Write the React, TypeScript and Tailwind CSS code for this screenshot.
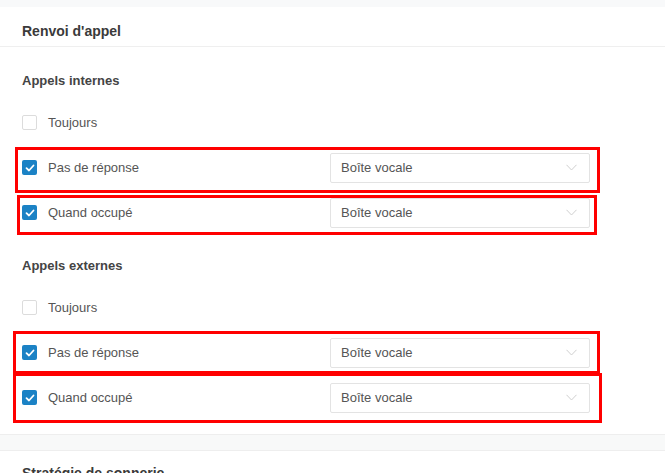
import React from "react";

const Check = ({ checked }: { checked: boolean }) =>
  checked ? (
    <span className="flex h-[15px] w-[15px] items-center justify-center rounded-[2px] bg-[#1b82c5]">
      <svg width="10" height="8" viewBox="0 0 10 8" fill="none">
        <path d="M1.5 4.2 L4 6.5 L8.5 1.5" stroke="white" strokeWidth="1.8" strokeLinecap="round" strokeLinejoin="round" />
      </svg>
    </span>
  ) : (
    <span className="block h-[15px] w-[15px] rounded-[2px] border border-[#dcdcdc] bg-white" />
  );

const Select = () => (
  <div className="flex h-[30px] w-[260px] items-center justify-between rounded-[2px] border border-[#e3e3e3] bg-white pl-[10px] pr-[12px]">
    <span className="text-[13px] text-[#555]">Boîte vocale</span>
    <svg width="11" height="7" viewBox="0 0 11 7" fill="none">
      <path d="M0.5 0.8 L5.5 6 L10.5 0.8" stroke="#cfcfcf" strokeWidth="1" />
    </svg>
  </div>
);

const Row = ({ label, checked, select }: { label: string; checked: boolean; select?: boolean }) => (
  <div className="flex h-[45px] items-center pl-[22px]">
    <div className="flex w-[308px] items-center gap-[11px]">
      <Check checked={checked} />
      <span className="text-[13px] text-[#555]">{label}</span>
    </div>
    {select && <Select />}
  </div>
);

const Section = ({ title }: { title: string }) => (
  <div>
    <div className="flex h-[20px] items-center pl-[22px] text-[13px] font-bold text-[#444]">{title}</div>
    <div className="mt-[9.5px]">
      <Row label="Toujours" checked={false} />
      <Row label="Pas de réponse" checked select />
      <Row label="Quand occupé" checked select />
    </div>
  </div>
);

const RedBox = ({ l, t, w, h }: { l: number; t: number; w: number; h: number }) => (
  <div
    className="pointer-events-none absolute border-[3px] border-[#ff0000]"
    style={{ left: l, top: t, width: w, height: h }}
  />
);

export default function App() {
  return (
    <div
      className="relative h-[473px] w-[665px] overflow-hidden bg-white"
      style={{ fontFamily: '"Liberation Sans", Arial, sans-serif' }}
    >
      <div className="h-[7px] bg-[#f8f9fa]" />
      <div className="flex h-[40px] items-center border-b border-[#efefef] pl-[22px] pt-[9px] text-[14px] font-bold text-[#3a3a3a]">
        Renvoi d'appel
      </div>
      <div className="pt-[23.5px]">
        <Section title="Appels internes" />
        <div className="h-[20.5px]" />
        <Section title="Appels externes" />
      </div>
      <div className="mt-[14px] h-[17px] border-y border-[#eeeeee] bg-[#f8f9f9]" />
      <div className="pl-[22px] pt-[12px] text-[14px] font-bold text-[#3a3a3a]">Stratégie de sonnerie</div>

      <RedBox l={15} t={147} w={585} h={46} />
      <RedBox l={17} t={195} w={580} h={40} />
      <RedBox l={13} t={331} w={587} h={43} />
      <RedBox l={13} t={373} w={589} h={50} />
    </div>
  );
}
